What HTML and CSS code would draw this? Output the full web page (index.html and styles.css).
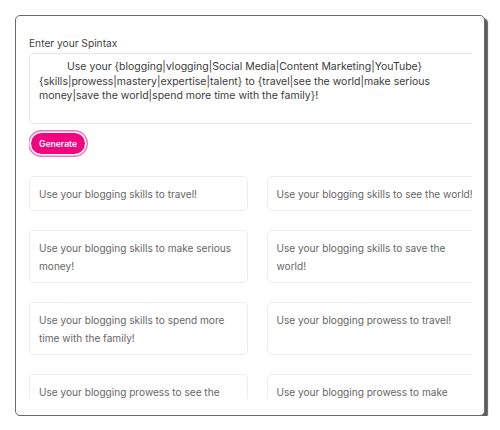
FILE: index.html
```html
<!DOCTYPE html>
<html>
<head>
<meta charset="utf-8">
<link rel="stylesheet" href="styles.css">
</head>
<body>
<div class="frame">
  <div class="viewport">
    <div class="content">
      <label class="label">Enter your Spintax</label>
      <div class="spintax">Use your {blogging|vlogging|Social Media|Content Marketing|YouTube}<br>{skills|prowess|mastery|expertise|talent} to {travel|see the world|make serious<br>money|save the world|spend more time with the family}!</div>
      <button class="generate">Generate</button>
      <div class="results">
        <div class="card">Use your blogging skills to travel!</div>
        <div class="card">Use your blogging skills to see the world!</div>
        <div class="card">Use your blogging skills to make serious money!</div>
        <div class="card">Use your blogging skills to save the world!</div>
        <div class="card">Use your blogging skills to spend more time with the family!</div>
        <div class="card">Use your blogging prowess to travel!</div>
        <div class="card">Use your blogging prowess to see the world!</div>
        <div class="card">Use your blogging prowess to make serious money!</div>
      </div>
    </div>
  </div>
</div>
</body>
</html>
```

FILE: styles.css
```css
html, body {
  margin: 0;
  padding: 0;
  background: #ffffff;
}

body {
  font-family: Inter, "Noto Sans", sans-serif;
}

.frame {
  margin: 15px 0 0 15px;
  width: 470px;
  height: 401px;
  box-sizing: border-box;
  border: 1px solid #6a6a6a;
  border-radius: 5px;
  box-shadow: 3px 3px 1px rgba(40, 40, 40, 0.75);
  padding: 0 0 0 13px;
  background: #fff;
}

.viewport {
  width: 443px;
  height: 383px;
  overflow: hidden;
}

.content {
  width: 456px;
  padding-top: 20px;
}

.label {
  display: block;
  font-size: 10.2px;
  line-height: 14px;
  color: #444;
  margin-bottom: 3px;
}

.spintax {
  box-sizing: border-box;
  height: 71px;
  border: 1px solid #e6e6e6;
  border-radius: 4px;
  padding: 6px 9px;
  font-size: 10.5px;
  line-height: 14.5px;
  color: #3a3a3a;
  text-indent: 28px;
  white-space: nowrap;
}

.generate {
  display: block;
  margin: 9px 0 0 2px;
  height: 21px;
  padding: 0 8px;
  border: none;
  border-radius: 11px;
  background: #f0047f;
  color: #fff;
  font-family: Inter, "Noto Sans", sans-serif;
  font-size: 8.6px;
  font-weight: 600;
  box-shadow: 0 0 0 1.5px #fff, 0 0 0 3px #f276b6;
}

.results {
  margin-top: 22px;
  display: grid;
  grid-template-columns: 219px 219px;
  column-gap: 18.5px;
  row-gap: 19px;
}

.card {
  border: 1px solid #ededed;
  border-radius: 5px;
  padding: 7.5px 9px;
  font-size: 10.1px;
  line-height: 18px;
  color: #666;
}
```
